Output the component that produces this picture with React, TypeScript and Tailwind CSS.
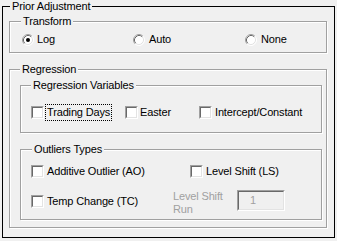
import React from "react";

function Radio({ checked }: { checked?: boolean }) {
  return (
    <svg width="12" height="12" viewBox="0 0 12 12" className="shrink-0">
      <circle cx="6" cy="6" r="5" fill="#fff" />
      <path d="M2.11 9.89 A5.5 5.5 0 0 1 9.89 2.11" fill="none" stroke="#a0a0a0" strokeWidth="1" />
      <path d="M9.89 2.11 A5.5 5.5 0 0 1 2.11 9.89" fill="none" stroke="#ffffff" strokeWidth="1" />
      <path d="M2.82 9.18 A4.5 4.5 0 0 1 9.18 2.82" fill="none" stroke="#696969" strokeWidth="1" />
      <path d="M9.18 2.82 A4.5 4.5 0 0 1 2.82 9.18" fill="none" stroke="#e3e3e3" strokeWidth="1" />
      {checked && <circle cx="6" cy="6" r="2" fill="#000" />}
    </svg>
  );
}

function Box() {
  return (
    <div className="w-[13px] h-[13px] shrink-0 border border-t-[#a0a0a0] border-l-[#a0a0a0] border-r-white border-b-white">
      <div className="w-full h-full border border-t-[#696969] border-l-[#696969] border-r-[#e3e3e3] border-b-[#e3e3e3] bg-white" />
    </div>
  );
}

const etched =
  "box-border border border-[#a0a0a0] shadow-[1px_1px_0_0_#ffffff,inset_1px_1px_0_0_#ffffff]";

export default function App() {
  return (
    <div className="w-[337px] h-[241px] bg-[#f0f0f0] font-['Liberation_Sans',Arial,sans-serif] text-[11px] leading-[13px] tracking-[-0.15px] text-black overflow-hidden">
      <div className="pl-[2px]">
        <fieldset className="box-border w-[333px] h-[238px] border border-black">
          <legend className="ml-[7px] pl-[2px] pr-[2px] h-[13px] leading-[13px] bg-[#f0f0f0]">
            Prior Adjustment
          </legend>
          <div className="pl-[6px] pt-[2px]">
            {/* Transform */}
            <fieldset className={`${etched} w-[318px] h-[38px]`}>
              <legend className="ml-[11px] pl-[2px] pr-[2px] h-[13px] leading-[13px] bg-[#f0f0f0]">
                Transform
              </legend>
              <div className="flex pl-[12px] pt-[5px]">
                <div className="w-[111px] h-[13px] flex items-center gap-[3px]">
                  <Radio checked />
                  <span>Log</span>
                </div>
                <div className="w-[112px] h-[13px] flex items-center gap-[4px]">
                  <Radio />
                  <span>Auto</span>
                </div>
                <div className="h-[13px] flex items-center gap-[4px]">
                  <Radio />
                  <span>None</span>
                </div>
              </div>
            </fieldset>

            {/* Regression */}
            <fieldset className={`${etched} mt-[10px] w-[318px] h-[165px]`}>
              <legend className="ml-[10px] pl-[2px] pr-[2px] h-[13px] leading-[13px] bg-[#f0f0f0]">
                Regression
              </legend>
              <div className="pl-[10px] pt-[3px]">
                <fieldset className={`${etched} w-[302px] h-[54px]`}>
                  <legend className="ml-[10px] pl-[2px] pr-[2px] h-[13px] leading-[13px] bg-[#f0f0f0]">
                    Regression Variables
                  </legend>
                  <div className="flex pl-[10px] pt-[12px]">
                    <div className="w-[94px] h-[17px] flex items-center gap-[1px]">
                      <Box />
                      <span className="h-[17px] pl-[1px] pr-[1px] flex items-center border border-dotted border-black">
                        Trading Days
                      </span>
                    </div>
                    <div className="w-[74px] h-[17px] flex items-center gap-[2px]">
                      <Box />
                      <span>Easter</span>
                    </div>
                    <div className="h-[17px] flex items-center gap-[3px]">
                      <Box />
                      <span>Intercept/Constant</span>
                    </div>
                  </div>
                </fieldset>

                <fieldset className={`${etched} mt-[10px] w-[302px] h-[77px]`}>
                  <legend className="ml-[11px] pl-[2px] pr-[2px] h-[13px] leading-[13px] bg-[#f0f0f0]">
                    Outliers Types
                  </legend>
                  <div className="pl-[10px] pt-[9px]">
                    <div className="flex">
                      <div className="w-[159px] h-[13px] flex items-center gap-[3px]">
                        <Box />
                        <span>Additive Outlier (AO)</span>
                      </div>
                      <div className="h-[13px] flex items-center gap-[3px]">
                        <Box />
                        <span>Level Shift (LS)</span>
                      </div>
                    </div>
                    <div className="flex items-start mt-[12px]">
                      <div className="w-[142px] h-[13px] mt-[5px] flex items-center gap-[3px]">
                        <Box />
                        <span>Temp Change (TC)</span>
                      </div>
                      <div className="w-[64px] text-[#a0a0a0] leading-[13px]">
                        Level Shift
                        <br />
                        Run
                      </div>
                      <div className="box-border w-[48px] h-[21px] border border-t-[#a0a0a0] border-l-[#a0a0a0] border-r-white border-b-white">
                        <div className="box-border w-full h-full border border-t-[#696969] border-l-[#696969] border-r-[#e3e3e3] border-b-[#e3e3e3] bg-[#f0f0f0] pl-[11px] flex items-center text-[#a0a0a0]">
                          1
                        </div>
                      </div>
                    </div>
                  </div>
                </fieldset>
              </div>
            </fieldset>
          </div>
        </fieldset>
      </div>
    </div>
  );
}
